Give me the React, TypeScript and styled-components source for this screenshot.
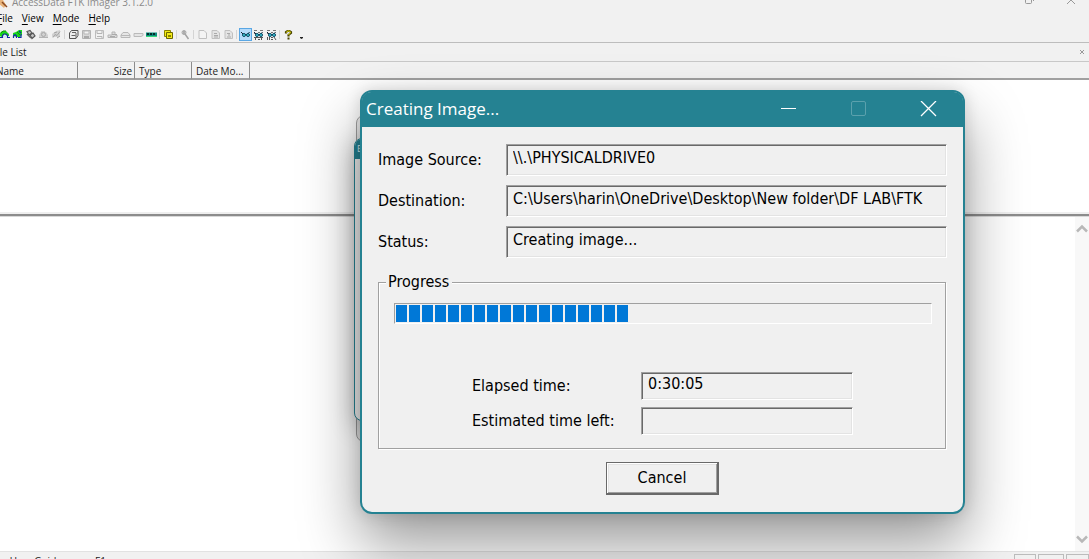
import React from "react";
import styled, { createGlobalStyle, css } from "styled-components";

const TEAL = "#258292";
const FACE = "#f0f0f0";
const UI = `"Open Sans", "Noto Sans", sans-serif`;
const DIALOG = `Tahoma, "DejaVu Sans Condensed", "Noto Sans", sans-serif`;

const Global = createGlobalStyle`
  * { box-sizing: border-box; }
  body { margin: 0; background: ${FACE}; font-family: ${UI}; overflow: hidden; }
`;

const Desktop = styled.div`
  position: relative;
  height: 100vh;
  overflow: hidden;
`;

const MainWindow = styled.main`
  display: flex;
  flex-direction: column;
  height: 100%;
  margin-left: -8px;
  background: #f1f1f1;
  color: #1a1a1a;
  font-size: 10px;
`;

const TitleBar = styled.header`
  display: flex;
  align-items: flex-end;
  height: 10px;
  overflow: hidden;
  padding: 0 12px 0 6px;
  color: #8a8a8a;
  svg { flex: none; }
`;

const AppTitle = styled.span`
  flex: 1;
  line-height: 16px;
  padding-left: 4px;
  white-space: nowrap;
`;

const CaptionButton = styled.button`
  display: flex;
  padding: 0;
  margin-left: 30px;
  border: 0;
  background: none;
`;

const MenuBar = styled.nav`
  display: flex;
  gap: 9px;
  height: 17px;
  padding-left: 5px;
`;

const MenuItem = styled.button`
  padding: 0;
  border: 0;
  background: none;
  font: 400 10px/17px ${UI};
  color: #000;
  u { text-underline-offset: 2px; }
`;

const ToolBar = styled.div`
  display: flex;
  align-items: center;
  height: 16px;
  padding-left: 6px;
  border-bottom: 1px solid #bdbdbd;
`;

const Tool = styled.button<{ $active?: boolean }>`
  display: flex;
  align-items: center;
  justify-content: center;
  flex: none;
  width: 13px;
  height: 13px;
  padding: 0;
  border: 0;
  background: none;
  ${(p) => p.$active && css`background: #b5dafa; outline: 1px solid #5aa7e4; outline-offset: -1px;`}
`;

const Divider = styled.span`
  flex: none;
  width: 1px;
  height: 9px;
  margin: 0 2px 0 1px;
  background: #d4d4d4;
`;

const PaneTitle = styled.div`
  display: flex;
  align-items: center;
  justify-content: space-between;
  height: 19px;
  padding: 0 4px 0 0;
  border-bottom: 1px solid #c8c8c8;
  line-height: 20px;
`;

const PaneClose = styled.button`
  display: flex;
  padding: 0;
  border: 0;
  background: none;
`;

const ListPane = styled.section`
  flex: none;
  height: 154px;
  background: #fff;
  border-bottom: 2px solid #8c8c8c;
  box-shadow: inset 0 -2px 0 #efefef, 0 1px 0 #d8d8d8;
`;

const FileTable = styled.table`
  width: 100%;
  table-layout: fixed;
  border-collapse: separate;
  border-spacing: 0;
  background: #f2f2f2;
`;

const Th = styled.th<{ $w?: number; $end?: boolean }>`
  height: 18px;
  width: ${(p) => (p.$w ? `${p.$w}px` : "auto")};
  padding: 2px 2px 0 4px;
  border-right: ${(p) => (p.$w ? "1px solid #8c8c8c" : "0")};
  border-bottom: 2px solid #a0a0a0;
  font-weight: 400;
  line-height: 14px;
  text-align: ${(p) => (p.$end ? "right" : "left")};
  white-space: nowrap;
`;

const Viewer = styled.section`
  display: flex;
  justify-content: flex-end;
  flex: 1;
  min-height: 0;
  margin-top: 1px;
  background: #fff;
`;

const ScrollTrack = styled.div`
  display: flex;
  flex-direction: column;
  justify-content: space-between;
  width: 14px;
  padding: 7px 0;
  background: #f8f8f8;
`;

const ScrollButton = styled.button`
  display: flex;
  padding: 0 1px;
  border: 0;
  background: none;
`;

const StatusBar = styled.footer`
  display: flex;
  justify-content: space-between;
  flex: none;
  height: 8px;
  overflow: hidden;
  border-top: 1px solid #e2e2e2;
  padding: 2px 0 0 0;
  line-height: 14px;
`;

const StatusCells = styled.div`
  display: flex;
  gap: 2px;
`;

const StatusCell = styled.span<{ $w: number }>`
  width: ${(p) => p.$w}px;
  height: 14px;
  border: 1px solid #bcbcbc;
`;

const backWindow = css`
  position: absolute;
  width: 560px;
  border-radius: 8px;
  overflow: hidden;
  background: ${FACE};
`;

const RearWindow = styled.div`
  ${backWindow}
  left: 356px;
  top: 115px;
  height: 327px;
  border: 1px solid #a2a2a2;
`;

const MiddleWindow = styled.div`
  ${backWindow}
  left: 354px;
  top: 138px;
  height: 283px;
  border: 1px solid ${TEAL};
  box-shadow: 0 6px 24px rgba(0, 0, 0, 0.25);
`;

const MiddleTitle = styled.div`
  height: 20px;
  padding-left: 2px;
  background: ${TEAL};
  color: #d8edf0;
  font-size: 9px;
  line-height: 19px;
`;

const Dialog = styled.section`
  position: absolute;
  left: 360px;
  top: 90px;
  width: 605px;
  border: 2px solid ${TEAL};
  border-radius: 12px;
  background: ${FACE};
  box-shadow: 0 30px 60px rgba(0, 0, 0, 0.4), 0 0 16px rgba(0, 0, 0, 0.14);
  font: 16px/20px ${DIALOG};
  color: #000;
`;

const DialogTitle = styled.header`
  display: flex;
  align-items: center;
  height: 35px;
  padding: 0 26px 0 4px;
  border-radius: 9px 9px 0 0;
  background: ${TEAL};
  color: #fff;
  h1 { flex: 1; margin: 0; font: 400 17px/22px ${UI}; padding-bottom: 2px; }
`;

const DialogControls = styled.div`
  display: flex;
  gap: 53px;
`;

const DialogControl = styled.button`
  display: flex;
  padding: 0;
  border: 0;
  background: none;
`;

const DialogBody = styled.form`
  display: flex;
  flex-direction: column;
  padding: 17px 16px;
`;

const Rows = styled.div`
  display: grid;
  grid-template-columns: 128px 1fr;
  row-gap: 9px;
  align-items: center;
`;

const Label = styled.label`
  white-space: nowrap;
  padding-bottom: 1px;
`;

const Field = styled.input<{ $h: number }>`
  width: 100%;
  min-width: 0;
  height: ${(p) => p.$h}px;
  padding: 0 6px 5px;
  border: 1px solid;
  border-color: #a0a0a0 #fff #fff #a0a0a0;
  border-radius: 0;
  box-shadow: inset 1px 1px 0 #696969, inset -1px -1px 0 #e3e3e3;
  background: ${FACE};
  font: inherit;
  color: inherit;
  outline: 0;
`;

const Group = styled.fieldset`
  min-width: 0;
  margin: 14px 1px 0 0;
  padding: 0 13px 13px 15px;
  border: 1px solid #a0a0a0;
  box-shadow: 1px 1px 0 #fff, inset 1px 1px 0 #fff;
`;

const Legend = styled.legend`
  margin-left: -8px;
  padding: 0 3px 0 2px;
  background: ${FACE};
`;

const Bar = styled.progress`
  display: block;
  appearance: none;
  width: 100%;
  height: 21px;
  margin-top: 11px;
  padding: 1px;
  border: 1px solid;
  border-color: #a0a0a0 #fff #fff #a0a0a0;
  background: ${FACE};
  &::-webkit-progress-bar { background: ${FACE}; }
  &::-webkit-progress-value {
    background: repeating-linear-gradient(90deg, #0078d7 0 11px, ${FACE} 11px 13px);
  }
`;

const Times = styled.div`
  display: grid;
  grid-template-columns: 169px 212px;
  row-gap: 7px;
  align-items: center;
  margin-top: 48px;
  padding-left: 78px;
`;

const Cancel = styled.button`
  align-self: center;
  width: 113px;
  height: 33px;
  margin-top: 13px;
  padding: 0;
  border: 1px solid #696969;
  border-width: 1px 2px 2px 1px;
  border-radius: 0;
  background: ${FACE};
  box-shadow: inset 1px 1px 0 #fff, inset -1px -1px 0 #a0a0a0, inset 2px 2px 0 #e3e3e3;
  font: inherit;
  color: inherit;
`;

const Glyph = ({ children }: { children: React.ReactNode }) => (
  <svg width="11" height="11" viewBox="0 0 11 11" fill="none" aria-hidden="true">{children}</svg>
);

const drives = (
  <Glyph>
    <path d="M0 7V5l3-3h4l3 3v2H8L5.500 5 3 8z" fill="#18d818" />
    <path d="M2 4l2-2h3" stroke="#0b8f0b" />
    <path d="M3.500 9V6.500L5 5h2l1.500 1.500V9M1 8.500h3M8 8.500h3" stroke="#1428a8" strokeWidth="1.200" />
    <path d="M4.500 6.500h3v2h-3z" fill="#c8e4ff" />
  </Glyph>
);
const addAll = (
  <Glyph>
    <path d="M1 7V4l3-1 3-2h3v5L8 8H5z" fill="#18d818" />
    <path d="M1.500 9V7L3 5.500l1.500 1.500v2M7 2l2 2M6 8.500h3V5" stroke="#1428a8" strokeWidth="1.200" />
    <path d="M5 3l3 3" stroke="#0b8f0b" />
  </Glyph>
);
const mount = (
  <Glyph>
    <path d="M2 2.500l3-1 2 2.500-3 2zM5 6l3-2 2 3-3 2.500z" fill="#c4c4c4" stroke="#555" strokeWidth="1.200" />
    <path d="M2 5l4 4" stroke="#666" strokeWidth="1.500" />
  </Glyph>
);
const removeOne = (
  <Glyph>
    <path d="M1 8V6l2-3h5l2 3v2z" fill="#d2d2d2" />
    <circle cx="5.500" cy="5.500" r="2" stroke="#a8a8a8" />
    <path d="M1 8.500h9M3 3h4" stroke="#b4b4b4" />
  </Glyph>
);
const removeAll = (
  <Glyph>
    <path d="M1 8V5l4-3 4-1v7z" fill="#d2d2d2" />
    <path d="M2 8.500l2-3 2 1 3-4M6 9l3-2M3 4l3-1" stroke="#a4a4a4" />
  </Glyph>
);
const createImage = (
  <Glyph>
    <path d="M3.500 1.500h6.500v5l-2 3H1.500V4z" fill="#eee" stroke="#555" />
    <path d="M4 3.500h4M3.500 6.500h4M8 4v5" stroke="#666" />
  </Glyph>
);
const save = (
  <Glyph>
    <path d="M1.500 1.500h8v8h-8z" fill="#d8d8d8" stroke="#b4b4b4" />
    <path d="M3 2h5v3H3z" fill="#f3f3f3" stroke="#b8b8b8" />
    <path d="M3 7h5v2.500H3z" fill="#aaa" />
  </Glyph>
);
const saveLogical = (
  <Glyph>
    <path d="M1.500 1.500h8v8h-8z" stroke="#bcbcbc" />
    <path d="M3 4.500h5M3 2v2.500M8 2v2.500M3 7.500h5v2" stroke="#b4b4b4" />
  </Glyph>
);
const memory = (
  <Glyph>
    <path d="M1 8.500V6h4V3h3v3h2v2.500z" fill="#ddd" stroke="#b4b4b4" />
    <path d="M5 5.500h5M3 7.500h5" stroke="#aaa" />
  </Glyph>
);
const disk = (
  <Glyph>
    <path d="M3 3.500h5L10 6v2.500H1V6z" fill="#e6e6e6" stroke="#b8b8b8" />
    <path d="M1 6.500h9" stroke="#b8b8b8" />
  </Glyph>
);
const drive = (
  <Glyph>
    <path d="M1 4.500h9v2L8 7.500H1z" fill="#e4e4e4" stroke="#bababa" />
  </Glyph>
);
const ram = (
  <Glyph>
    <path d="M0 3.500h11v4H0z" fill="#0d8b7c" />
    <path d="M1 5h9" stroke="#032a28" strokeWidth="2" strokeDasharray="2 1" />
    <path d="M0 7.500h11" stroke="#35d87a" />
  </Glyph>
);
const protectedFiles = (
  <Glyph>
    <path d="M1.500 1.500h6v6h-6z" fill="#f4ec18" stroke="#8a8400" />
    <path d="M3.500 3.500h6v6h-6z" fill="#f4ec18" stroke="#6c6800" />
    <path d="M5 6h3v2H5z" fill="#8c8400" />
  </Glyph>
);
const key = (
  <Glyph>
    <circle cx="4" cy="3.500" r="2" fill="#ccc" stroke="#aaa" />
    <path d="M5 5l3.500 5M4 2v3" stroke="#a4a4a4" strokeWidth="1.500" />
  </Glyph>
);
const page = (lines?: string) => (
  <Glyph>
    <path d="M2 1.500h5l2.500 2.500v5.500H2z" fill={lines ? "#e4e4e4" : "#f4f4f4"} stroke="#c0c0c0" />
    {lines && <path d={lines} stroke="#aaa" />}
  </Glyph>
);
const Glasses = ({ mark }: { mark?: string }) => (
  <Glyph>
    <path d="M1 3l2 2M9.500 3L8 5M4 5.500h3" stroke="#123" />
    <circle cx="4" cy="6" r="1.500" fill="#3ed0dc" stroke="#0c4560" />
    <circle cx="8" cy="6" r="1.500" fill="#3ed0dc" stroke="#0c4560" />
    {mark && <path d={mark} stroke="#555" />}
    {mark && <path d="M1 1.500h3M1 4.500h1M7 1.500h3M5 3.500h2" stroke="#777" />}
  </Glyph>
);
const help = (
  <Glyph>
    <path d="M3 4.500V3L4.500 2h2L8 3v1L5.500 6v1.500" stroke="#4a4600" strokeWidth="2.200" />
    <path d="M3.500 3.500l1-1.500h2l1 1.500L5.500 6" stroke="#e6dc10" />
    <path d="M4.500 8.500h2v2h-2z" fill="#4a4600" />
  </Glyph>
);

type ToolDef = { name: string; icon: React.ReactNode; active?: boolean };
const toolGroups: ToolDef[][] = [
  [
    { name: "Add evidence item", icon: drives },
    { name: "Add all attached devices", icon: addAll },
    { name: "Image mounting", icon: mount },
    { name: "Remove evidence item", icon: removeOne },
    { name: "Remove all evidence items", icon: removeAll },
  ],
  [
    { name: "Create disk image", icon: createImage },
    { name: "Export disk image", icon: save },
    { name: "Export logical image", icon: saveLogical },
    { name: "Add to custom content image", icon: memory },
    { name: "Create custom content image", icon: disk },
    { name: "Verify image", icon: drive },
    { name: "Capture memory", icon: ram },
  ],
  [{ name: "Obtain protected files", icon: protectedFiles }],
  [{ name: "Detect EFS encryption", icon: key }],
  [
    { name: "Export files", icon: page() },
    { name: "Export file hash list", icon: page("M4 4.500h3M4 6.500h4M4 8h4") },
    { name: "Export directory listing", icon: page("M4 4.500h3M4 8h4M5 6h2") },
  ],
  [
    { name: "Automatic preview", icon: <Glasses />, active: true },
    { name: "Text preview", icon: <Glasses mark="M1 8.500h9M2.500 8v3M5 10.500h2M8.500 8v3" /> },
    { name: "Hex preview", icon: <Glasses mark="M1.500 8v3M3.500 8v3M5 8.500h2M5 10.500h2M8 8l2 3" /> },
  ],
  [{ name: "Help", icon: help }],
];

const menus = ["File", "View", "Mode", "Help"];

export default function App() {
  return (
    <Desktop>
      <Global />
      <MainWindow>
        <TitleBar>
          <svg width="10" height="10" viewBox="0 0 10 10" aria-hidden="true">
            <path d="M0 0h5l3 5-2 3-6-5z" fill="#e8b47c" />
            <path d="M4 2l5 5" stroke="#8b4a22" strokeWidth="1.500" />
          </svg>
          <AppTitle>AccessData FTK Imager 3.1.2.0</AppTitle>
          <CaptionButton aria-label="Restore">
            <svg width="12" height="10" viewBox="0 0 12 10" fill="none" stroke="#999">
              <path d="M2.500-3h6v5.500a1 1 0 0 1-1 1h-4a1 1 0 0 1-1-1zM10.500-3v4" />
            </svg>
          </CaptionButton>
          <CaptionButton aria-label="Close">
            <svg width="12" height="10" viewBox="0 0 12 10" fill="none" stroke="#999">
              <path d="M2 4l4-4 4 4" />
            </svg>
          </CaptionButton>
        </TitleBar>
        <MenuBar>
          {menus.map((m) => (
            <MenuItem key={m}><u>{m[0]}</u>{m.slice(1)}</MenuItem>
          ))}
        </MenuBar>
        <ToolBar>
          {toolGroups.map((group, i) => (
            <React.Fragment key={i}>
              {i > 0 && <Divider />}
              {group.map((t) => (
                <Tool key={t.name} aria-label={t.name} $active={t.active}>{t.icon}</Tool>
              ))}
            </React.Fragment>
          ))}
          <Tool aria-label="Toolbar options">
            <Glyph><path d="M4 8h3v1L5.500 10 4 9z" fill="#222" /></Glyph>
          </Tool>
        </ToolBar>
        <PaneTitle>
          <span>File List</span>
          <PaneClose aria-label="Close pane">
            <svg width="6" height="6" viewBox="0 0 6 6" stroke="#999"><path d="M1 1l4 4M5 1L1 5" /></svg>
          </PaneClose>
        </PaneTitle>
        <ListPane>
          <FileTable>
            <thead>
              <tr>
                <Th $w={86}>Name</Th>
                <Th $w={57} $end>Size</Th>
                <Th $w={57}>Type</Th>
                <Th $w={58}>Date Mo...</Th>
                <Th />
              </tr>
            </thead>
          </FileTable>
        </ListPane>
        <Viewer>
          <ScrollTrack>
            <ScrollButton aria-label="Scroll up">
              <svg width="12" height="10" viewBox="0 0 12 10" fill="none" stroke="#b8b8b8" strokeWidth="2.500"><path d="M1 7.500l5-5 5 5" /></svg>
            </ScrollButton>
            <ScrollButton aria-label="Scroll down">
              <svg width="12" height="10" viewBox="0 0 12 10" fill="none" stroke="#b8b8b8" strokeWidth="2.500"><path d="M1 2.500l5 5 5-5" /></svg>
            </ScrollButton>
          </ScrollTrack>
        </Viewer>
        <StatusBar>
          <span>For User Guide, press F1</span>
          <StatusCells>
            <StatusCell $w={22} />
            <StatusCell $w={26} />
            <StatusCell $w={23} />
          </StatusCells>
        </StatusBar>
      </MainWindow>

      <RearWindow />
      <MiddleWindow><MiddleTitle>E</MiddleTitle></MiddleWindow>

      <Dialog role="dialog" aria-labelledby="dialog-title">
        <DialogTitle>
          <h1 id="dialog-title">Creating Image...</h1>
          <DialogControls>
            <DialogControl aria-label="Minimize">
              <svg width="17" height="17" viewBox="0 0 17 17" stroke="#fff"><path d="M1 7.500h15" /></svg>
            </DialogControl>
            <DialogControl aria-label="Maximize" disabled>
              <svg width="17" height="17" viewBox="0 0 17 17" fill="none" stroke="#5ba1ad"><rect x="1.500" y="0.500" width="14" height="14" rx="1.500" /></svg>
            </DialogControl>
            <DialogControl aria-label="Close">
              <svg width="17" height="17" viewBox="0 0 17 17" stroke="#fff" strokeWidth="1.300"><path d="M1 0l15 15M16 0L1 15" /></svg>
            </DialogControl>
          </DialogControls>
        </DialogTitle>
        <DialogBody>
          <Rows>
            <Label htmlFor="source">Image Source:</Label>
            <Field $h={32} id="source" readOnly value={"\\\\.\\PHYSICALDRIVE0"} />
            <Label htmlFor="destination">Destination:</Label>
            <Field $h={32} id="destination" readOnly value={"C:\\Users\\harin\\OneDrive\\Desktop\\New folder\\DF LAB\\FTK"} />
            <Label htmlFor="status">Status:</Label>
            <Field $h={32} id="status" readOnly value="Creating image..." />
          </Rows>
          <Group>
            <Legend>Progress</Legend>
            <Bar aria-label="Progress" value={18} max={41} />
            <Times>
              <Label htmlFor="elapsed">Elapsed time:</Label>
              <Field $h={28} id="elapsed" readOnly value="0:30:05" />
              <Label htmlFor="left">Estimated time left:</Label>
              <Field $h={28} id="left" readOnly value="" />
            </Times>
          </Group>
          <Cancel type="button">Cancel</Cancel>
        </DialogBody>
      </Dialog>
    </Desktop>
  );
}
